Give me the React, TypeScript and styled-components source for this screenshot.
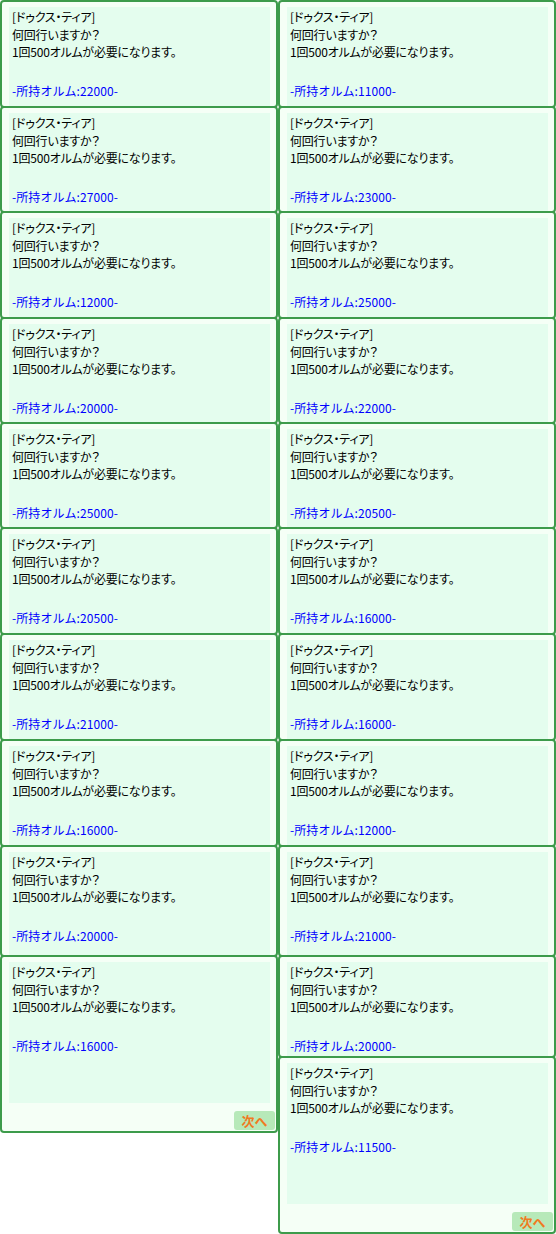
import styled, { createGlobalStyle } from "styled-components";

const GlobalStyle = createGlobalStyle`
	html, body {
		margin: 0;
		padding: 0;
		background: #ffffff;
	}
	body {
		font-family: "Noto Sans CJK JP", "Noto Sans", sans-serif;
		font-size: 12px;
	}
`

type Entry = {
	orum: string
	height: number
	last?: boolean
}

const left: Entry[] = [
	{ orum: "22000", height: 106 },
	{ orum: "27000", height: 105 },
	{ orum: "12000", height: 106 },
	{ orum: "20000", height: 105 },
	{ orum: "25000", height: 105 },
	{ orum: "20500", height: 106 },
	{ orum: "21000", height: 106 },
	{ orum: "16000", height: 106 },
	{ orum: "20000", height: 110 },
	{ orum: "16000", height: 176, last: true },
]

const right: Entry[] = [
	{ orum: "11000", height: 106 },
	{ orum: "23000", height: 105 },
	{ orum: "25000", height: 106 },
	{ orum: "22000", height: 105 },
	{ orum: "20500", height: 105 },
	{ orum: "16000", height: 106 },
	{ orum: "16000", height: 106 },
	{ orum: "12000", height: 106 },
	{ orum: "21000", height: 110 },
	{ orum: "20000", height: 101 },
	{ orum: "11500", height: 176, last: true },
]

const Page = styled.div`
	display: grid;
	grid-template-columns: 278px 278px;
	align-items: start;
	width: 556px;
`

const Column = styled.div`
	display: flex;
	flex-direction: column;
`

const Card = styled.div<{ $h: number }>`
	box-sizing: border-box;
	height: ${p => p.$h + 2}px;
	border: 2px solid #3d9b4b;
	border-radius: 4px;
	background: #f5fff6;
	padding: 5px 6px 0 7px;
	display: flex;
	flex-direction: column;
	overflow: hidden;

	& + & {
		margin-top: -2px;
	}
`

const Panel = styled.div<{ $last?: boolean }>`
	background: #e4fdee;
	padding: 1px 3px 0;
	color: #000000;
	line-height: 17.5px;
	${p => p.$last ? "height: 141px; box-sizing: border-box;" : "flex: 1;"}
`

const Line = styled.div`
	white-space: nowrap;
	font-feature-settings: "palt";
	letter-spacing: -0.2px;
`

const Orum = styled.div`
	margin-top: 21px;
	color: #0000ff;
	white-space: nowrap;
	letter-spacing: 0.1px;
`

const Footer = styled.div`
	display: flex;
	justify-content: flex-end;
	padding-top: 8px;
	margin-right: -5px;
`

const NextButton = styled.button`
	width: 41px;
	height: 19px;
	padding: 0;
	border: none;
	border-radius: 3px;
	background: #b7e9b9;
	color: #f07a22;
	font-family: "Noto Sans CJK JP", sans-serif;
	font-weight: 700;
	font-size: 13px;
	line-height: 19px;
`

const Dialog = ({ entry }: { entry: Entry }) => (
	<Card $h={entry.height}>
		<Panel $last={entry.last}>
			<Line>[ドゥクス・ティア]</Line>
			<Line>何回行いますか？</Line>
			<Line>1回500オルムが必要になります。</Line>
			<Orum>-所持オルム:{entry.orum}-</Orum>
		</Panel>
		{entry.last && (
			<Footer>
				<NextButton>次へ</NextButton>
			</Footer>
		)}
	</Card>
)

const App = () => (
	<>
		<GlobalStyle />
		<Page>
			<Column>
				{left.map((e, i) => <Dialog key={i} entry={e} />)}
			</Column>
			<Column>
				{right.map((e, i) => <Dialog key={i} entry={e} />)}
			</Column>
		</Page>
	</>
)

export default App
